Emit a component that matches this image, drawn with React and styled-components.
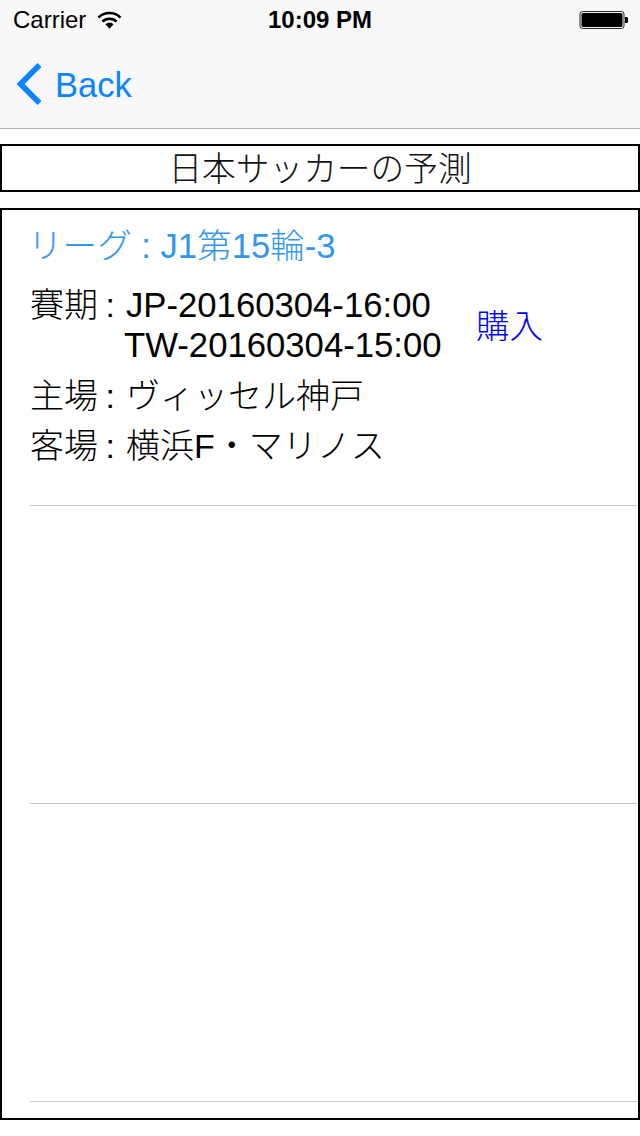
import React from "react";
import styled, { createGlobalStyle } from "styled-components";

const Global = createGlobalStyle`
  html, body { margin: 0; padding: 0; background: #fff; }
  body { font-family: "Liberation Sans", "Noto Sans CJK JP", sans-serif; color: #000; }
`;

const Page = styled.div`
  width: 640px;
  height: 1136px;
  display: flex;
  flex-direction: column;
  overflow: hidden;
`;

const NavBar = styled.header`
  height: 128px;
  flex: none;
  box-sizing: content-box;
  background: #f8f8f8;
  border-bottom: 1px solid #b4b4b4;
  display: flex;
  flex-direction: column;
`;

const StatusBar = styled.div`
  height: 40px;
  padding: 0 11px 0 13px;
  display: grid;
  grid-template-columns: 1fr auto 1fr;
  align-items: center;
  font-size: 24px;
`;

const StatusLeft = styled.div`
  display: flex;
  align-items: center;
  gap: 11px;
`;

const Clock = styled.div`
  font-weight: 700;
  font-size: 24px;
  margin-right: 2px;
`;

const StatusRight = styled.div`
  display: flex;
  justify-content: flex-end;
`;

const BackLink = styled.a`
  flex: 1;
  display: flex;
  align-items: center;
  gap: 12px;
  padding-left: 15px;
  color: #0a84ff;
  font-size: 34.5px;
`;

const BackLabel = styled.span`
  margin-top: 2px;
`;

const Content = styled.main`
  flex: 1;
  padding-top: 15px;
  padding-bottom: 16px;
  display: flex;
  flex-direction: column;
  gap: 16px;
  min-height: 0;
`;

const TitleBox = styled.h1`
  margin: 0;
  height: 48px;
  flex: none;
  box-sizing: border-box;
  border: 2px solid #000;
  display: flex;
  align-items: center;
  justify-content: center;
  font-size: 33.7px;
  font-weight: 300;
  font-family: "Noto Sans CJK JP", sans-serif;
  color: #111;
  padding-bottom: 3px;
`;

const ListBox = styled.section`
  flex: 1;
  box-sizing: border-box;
  border: 2px solid #000;
  display: flex;
  flex-direction: column;
  min-height: 0;
`;

const Row = styled.article`
  height: 298px;
  flex: none;
  box-sizing: border-box;
  margin-left: 28px;
  border-bottom: 1px solid #c8c8c8;
  position: relative;
  &:first-child { height: 296px; }
`;

const League = styled.div`
  padding-top: 14px;
  height: 45px;
  line-height: 44px;
  margin-left: -2px;
  font-size: 34.6px;
  font-weight: 300;
  color: #3296ee;
`;

const InfoLine = styled.div`
  display: flex;
  font-size: 34px;
  line-height: 40px;
  font-weight: 300;
  margin-top: ${(p) => p.$top}px;
`;

const Label = styled.span`
  flex: none;
  width: 96px;
  word-spacing: -2px;
`;

const Value = styled.span`
  white-space: nowrap;
`;

const DateLine = styled.span`
  display: block;
  font-size: 34.7px;
  margin-left: ${(p) => p.$shift}px;
`;

const BuyLink = styled.a`
  position: absolute;
  left: 446px;
  top: 95px;
  font-size: 33.5px;
  line-height: 44px;
  color: #0000f0;
  font-weight: 300;
`;

const WifiIcon = () => (
  <svg width="25" height="20" viewBox="0 0 26 20">
    <path d="M1.5 7.5 A16.5 16.5 0 0 1 24.5 7.5" fill="none" stroke="#000" strokeWidth="2.6" />
    <path d="M5.6 11.6 A10.6 10.6 0 0 1 20.4 11.6" fill="none" stroke="#000" strokeWidth="2.6" />
    <path d="M13 19 L8.8 14.4 A6 6 0 0 1 17.2 14.4 Z" fill="#000" />
  </svg>
);

const BatteryIcon = () => (
  <svg width="50" height="20" viewBox="0 0 50 20">
    <rect x="1" y="1.5" width="44" height="17" rx="2.5" fill="#f8f8f8" stroke="#222" strokeWidth="1" />
    <rect x="2.5" y="3" width="41" height="14" rx="1.5" fill="#000" />
    <path d="M46 7 h1.5 a1.5 1.5 0 0 1 1.5 1.5 v3 a1.5 1.5 0 0 1 -1.5 1.5 H46 Z" fill="#000" />
  </svg>
);

const BackChevron = () => (
  <svg width="28" height="44" viewBox="0 0 28 44">
    <path d="M24.5 3 L5.5 22 L24.5 41" fill="none" stroke="#0a84ff" strokeWidth="5.6" />
  </svg>
);

export default function App() {
  return (
    <Page>
      <Global />
      <NavBar>
        <StatusBar>
          <StatusLeft>
            <span>Carrier</span>
            <WifiIcon />
          </StatusLeft>
          <Clock>10:09 PM</Clock>
          <StatusRight>
            <BatteryIcon />
          </StatusRight>
        </StatusBar>
        <BackLink>
          <BackChevron />
          <BackLabel>Back</BackLabel>
        </BackLink>
      </NavBar>
      <Content>
        <TitleBox>日本サッカーの予測</TitleBox>
        <ListBox>
          <Row>
            <League>リーグ : J1第15輪-3</League>
            <InfoLine $top={16}>
              <Label>賽期 :</Label>
              <Value>
                <DateLine $shift={0}>JP-20160304-16:00</DateLine>
                <DateLine $shift={-2}>TW-20160304-15:00</DateLine>
              </Value>
            </InfoLine>
            <InfoLine $top={11}>
              <Label>主場 :</Label>
              <Value>ヴィッセル神戸</Value>
            </InfoLine>
            <InfoLine $top={10}>
              <Label>客場 :</Label>
              <Value>横浜F・マリノス</Value>
            </InfoLine>
            <BuyLink>購入</BuyLink>
          </Row>
          <Row />
          <Row />
        </ListBox>
      </Content>
    </Page>
  );
}
